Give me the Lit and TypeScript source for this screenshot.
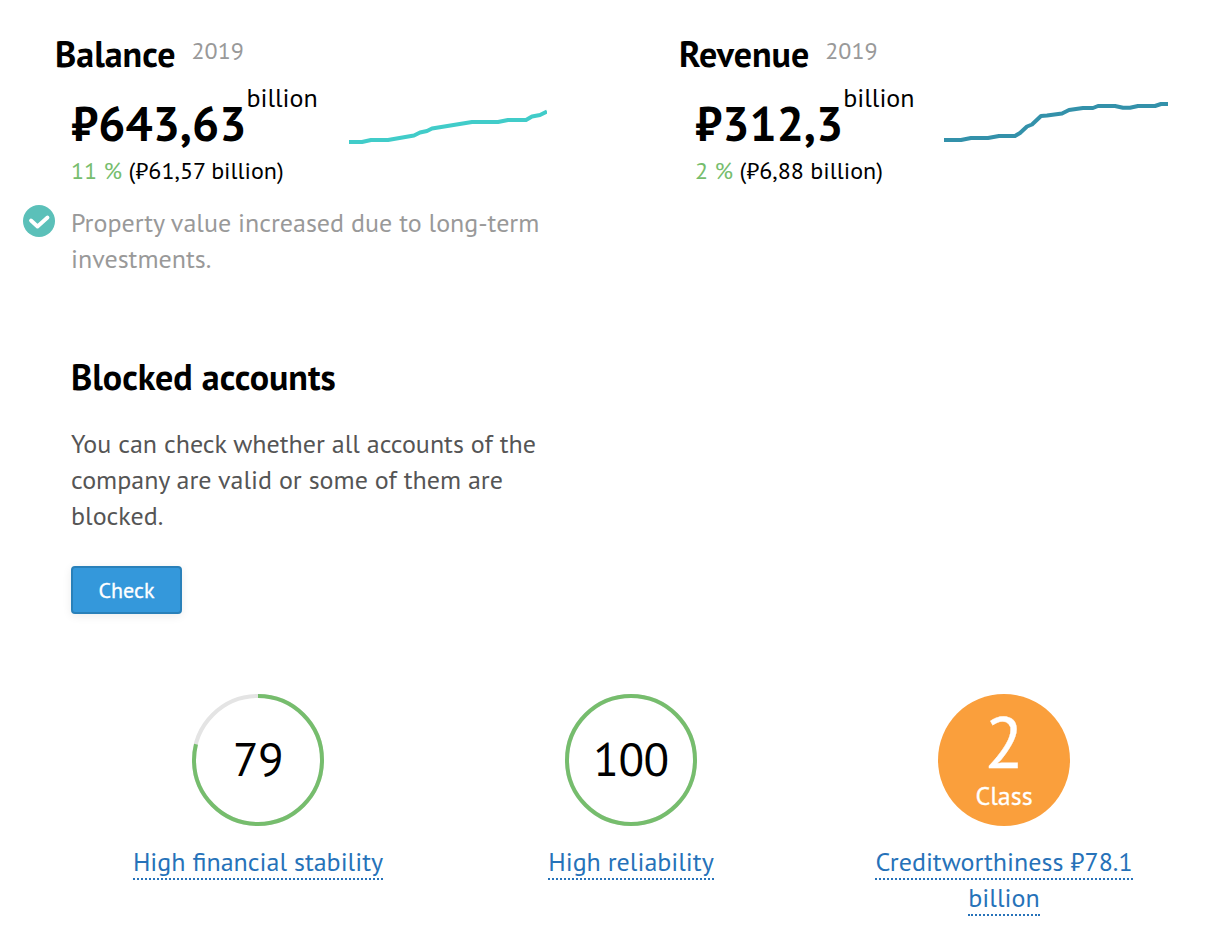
import { LitElement, html, css, svg } from "lit";
import { customElement, property } from "lit/decorators.js";

@customElement("spark-line")
export class SparkLine extends LitElement {
  @property({ type: String }) points = "";
  @property({ type: String }) color = "#000";
  @property({ type: Number }) width = 200;

  static styles = css`
    :host {
      display: block;
      flex: none;
    }
    svg {
      display: block;
    }
    polyline {
      fill: none;
      stroke-width: 4;
      stroke-linejoin: round;
    }
  `;

  render() {
    return html`
      <svg width=${this.width} height="50" viewBox="0 0 ${this.width} 50">
        ${svg`<polyline points=${this.points} stroke=${this.color}></polyline>`}
      </svg>
    `;
  }
}

@customElement("score-ring")
export class ScoreRing extends LitElement {
  @property({ type: Number }) value = 0;

  static styles = css`
    :host {
      display: grid;
      width: 132px;
      height: 132px;
    }
    svg,
    .value {
      grid-area: 1 / 1;
    }
    circle {
      fill: none;
      stroke-width: 4;
    }
    .track {
      stroke: #e4e4e4;
    }
    .bar {
      stroke: #76bd6d;
    }
    .value {
      text-align: center;
      font-size: 47px;
      line-height: 130px;
      color: #000;
      letter-spacing: -0.5px;
    }
  `;

  render() {
    return html`
      <svg width="132" height="132" viewBox="0 0 132 132">
        <circle class="track" cx="66" cy="66" r="64"></circle>
        <circle
          class="bar"
          cx="66"
          cy="66"
          r="64"
          pathLength="100"
          stroke-dasharray="${this.value} 100"
          transform="rotate(-90 66 66)"
        ></circle>
      </svg>
      <div class="value">${this.value}</div>
    `;
  }
}

@customElement("app-root")
export class AppRoot extends LitElement {
  static styles = css`
    :host {
      display: block;
      box-sizing: border-box;
      width: 1232px;
      height: 952px;
      padding: 32px 0 0 23px;
      overflow: hidden;
      background: #fff;
      color: #000;
      font-family: "PT Sans", Lato, "Noto Sans", sans-serif;
      font-size: 26px;
      line-height: 36px;
    }
    h2,
    p {
      margin: 0;
    }
    .figures {
      display: grid;
      grid-template-columns: 624px 1fr;
      height: 323px;
    }
    .figure {
      padding-left: 32px;
    }
    .head {
      display: flex;
      gap: 16px;
      height: 44px;
    }
    h2 {
      font-size: 36px;
      line-height: 44px;
      font-weight: 700;
    }
    .year {
      color: #999;
      font-size: 24px;
      line-height: 38px;
    }
    .body {
      display: flex;
      padding-left: 16px;
      height: 76px;
    }
    .amount {
      display: flex;
      width: 278px;
    }
    .revenue .amount {
      width: 249px;
    }
    .sum {
      font-size: 48px;
      line-height: 60px;
      font-weight: 700;
      padding-top: 17px;
    }
    .unit {
      padding-top: 4px;
    }
    spark-line {
      padding-top: 24px;
    }
    .change {
      padding-left: 16px;
      font-size: 24px;
      line-height: 38px;
    }
    .up {
      color: #76bd6d;
    }
    .note {
      display: flex;
      gap: 16px;
      margin: 15px 0 0 -32px;
      color: #999;
    }
    .note svg {
      flex: none;
    }
    .blocked {
      width: 520px;
      padding-left: 48px;
    }
    .blocked p {
      padding: 27px 0 32px;
      color: #555;
    }
    button {
      display: block;
      box-sizing: border-box;
      width: 111px;
      height: 48px;
      padding: 0;
      border: 2px solid #2980b9;
      border-radius: 4px;
      background: #3498db;
      box-shadow: 0 2px 10px rgba(0, 0, 0, 0.08);
      color: #fff;
      font: 500 22px/44px "PT Sans", Lato, "Noto Sans", sans-serif;
      -webkit-text-stroke: 0.3px #fff;
    }
    .scores {
      display: grid;
      grid-template-columns: repeat(3, 373px);
      padding: 80px 0 0 48.5px;
    }
    .score {
      display: flex;
      flex-direction: column;
      align-items: center;
      gap: 18px;
    }
    .caption {
      width: 320px;
      text-align: center;
    }
    .caption a {
      color: #2672b9;
      border-bottom: 2px dotted #2672b9;
    }
    .rating {
      box-sizing: border-box;
      width: 132px;
      height: 132px;
      padding-top: 12px;
      border-radius: 50%;
      background: #fa9f3c;
      color: #fff;
      text-align: center;
      -webkit-text-stroke: 0.3px #fff;
    }
    .grade {
      font-size: 72px;
      line-height: 72px;
    }
  `;

  render() {
    return html`
      <section class="figures">
        <div class="figure">
          <div class="head"><h2>Balance</h2><span class="year">2019</span></div>
          <div class="body">
            <div class="amount"><span class="sum">₽643,63</span><span class="unit">billion</span></div>
            <spark-line
              width="198"
              color="#41ccc9"
              points="0,42 13,42 22,40 39,40 65,35.5 71,32.5 78,31 83,28.5 123,22 149,22 159,20 177,20 183,16.5 191,15 198,11.5"
            ></spark-line>
          </div>
          <div class="change"><span class="up">11 %</span> (₽61,57 billion)</div>
          <div class="note">
            <svg width="32" height="32" viewBox="0 0 32 32">
              <circle cx="16" cy="16" r="16" fill="#5bc0b9"></circle>
              <path d="M8 15.5l6.500 6L24.500 12.500" fill="none" stroke="#fff" stroke-width="3.8" stroke-linecap="round" stroke-linejoin="round"></path>
            </svg>
            <p>Property value increased due to long-term<br />investments.</p>
          </div>
        </div>
        <div class="figure revenue">
          <div class="head"><h2>Revenue</h2><span class="year">2019</span></div>
          <div class="body">
            <div class="amount"><span class="sum">₽312,3</span><span class="unit">billion</span></div>
            <spark-line
              width="224"
              color="#3391aa"
              points="0,40 17,40 27,38 44,38 55,36 71,36 76,33 83,26.5 88,24.5 97,16 103,15.5 118,13.5 125,10 139,8 149,8 154,6 171,6 179,7.7 186,7.7 194,6 211,6 217,4 224,4"
            ></spark-line>
          </div>
          <div class="change"><span class="up">2 %</span> (₽6,88 billion)</div>
        </div>
      </section>

      <section class="blocked">
        <h2>Blocked accounts</h2>
        <p>
          You can check whether all accounts of the<br />company are valid or some of them
          are<br />blocked.
        </p>
        <button>Check</button>
      </section>

      <section class="scores">
        <div class="score">
          <score-ring value="79"></score-ring>
          <div class="caption"><a>High financial stability</a></div>
        </div>
        <div class="score">
          <score-ring value="100"></score-ring>
          <div class="caption"><a>High reliability</a></div>
        </div>
        <div class="score">
          <div class="rating">
            <div class="grade">2</div>
            <div>Class</div>
          </div>
          <div class="caption"><a>Creditworthiness ₽78.1<br />billion</a></div>
        </div>
      </section>
    `;
  }
}
